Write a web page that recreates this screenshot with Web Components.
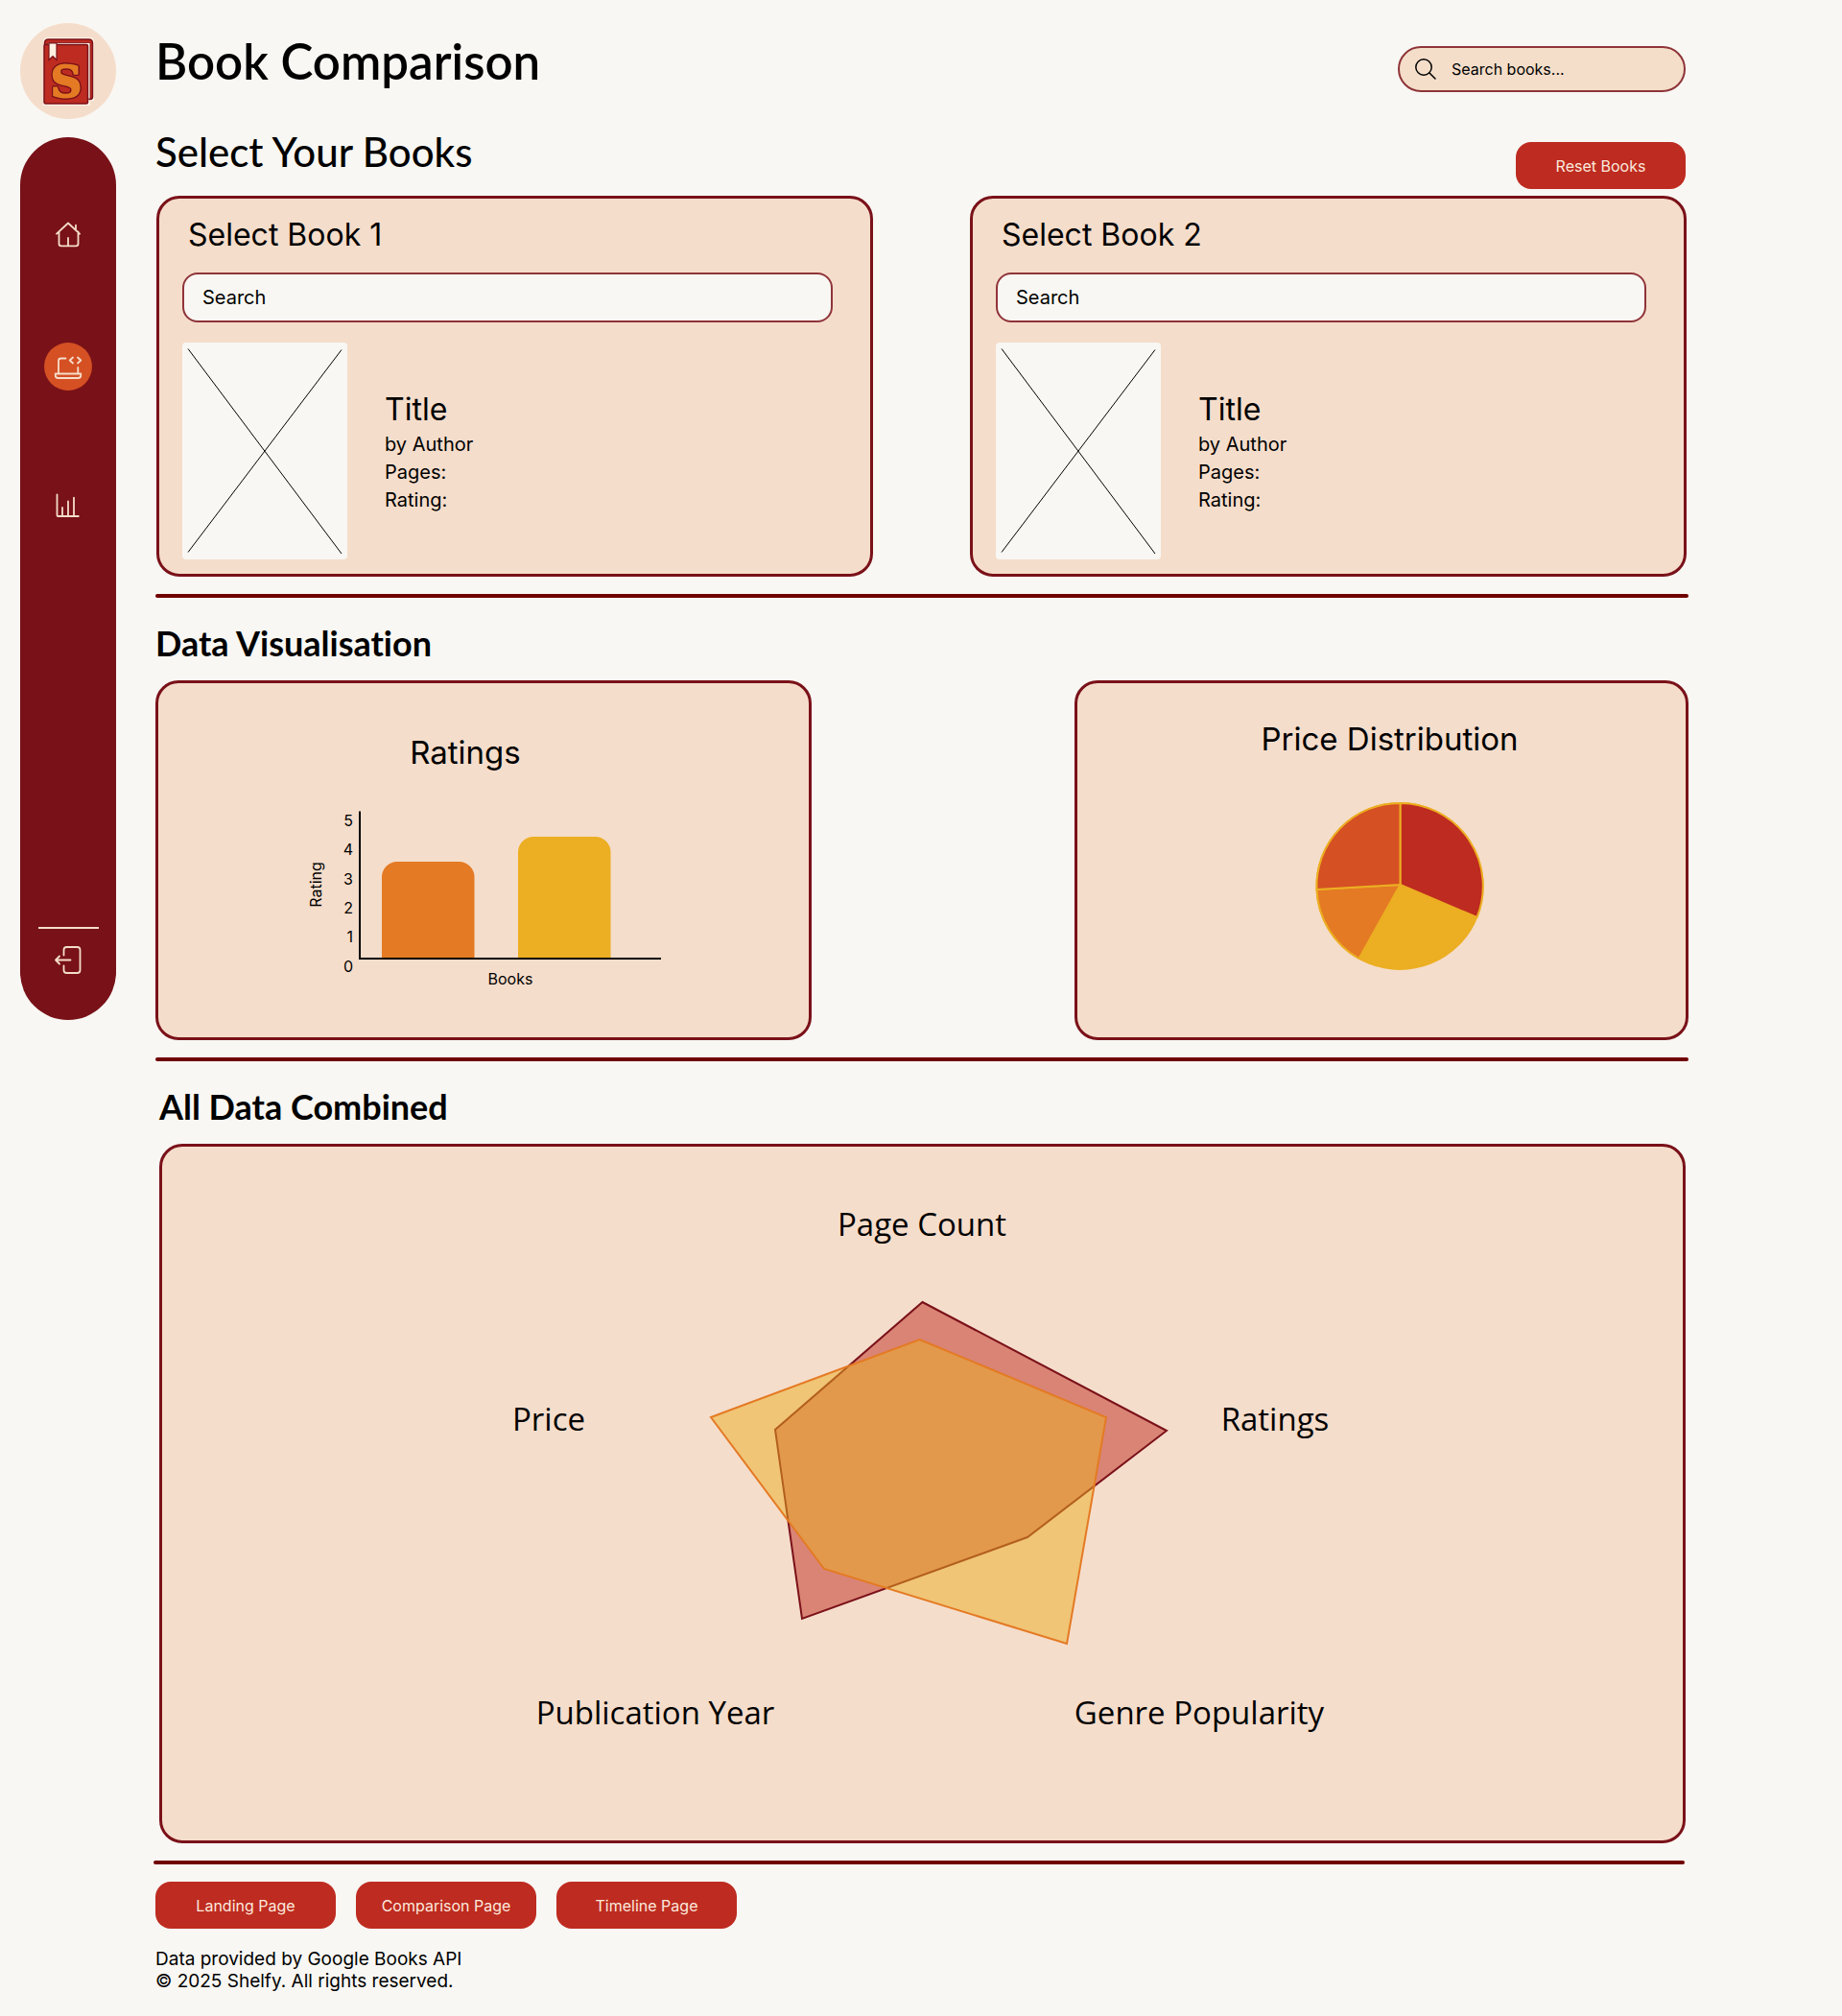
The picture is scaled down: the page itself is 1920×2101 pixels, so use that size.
<!DOCTYPE html>
<html lang="en">
<head>
<meta charset="utf-8">
<meta name="viewport" content="width=device-width, initial-scale=1">
<title>Book Comparison – Shelfy</title>
<style>
  :root {
    --paper: #f8f7f3;
    --sand: #f5ddcb;
    --wine: #781118;
    --field-line: #8f3439;
    --rule: #700000;
    --red: #be2b20;
    --rust: #d55023;
    --orange: #e47a24;
    --gold: #ecae22;
    --heading: Lato, "Open Sans", sans-serif;
    --body: Inter, "Liberation Sans", sans-serif;
  }
  body {
    margin: 0;
    background: var(--paper);
    color: #000;
    font: 400 20px/29px var(--body);
  }
</style>
</head>
<body>
<book-app></book-app>

<script>
const define = (name, html, init) => {
  const template = document.createElement('template');
  template.innerHTML = `<style>
    *, *::before, *::after { box-sizing: border-box; }
    h1, h2, h3, p, ul, figure { margin: 0; padding: 0; }
    ul { list-style: none; }
    svg { display: block; }
  </style>` + html;
  customElements.define(name, class extends HTMLElement {
    constructor() {
      super();
      this.attachShadow({ mode: 'open' }).append(template.content.cloneNode(true));
    }
    connectedCallback() { if (init) init(this, this.shadowRoot); }
  });
};

define('shelfy-logo', `
  <style>
    :host { display: block; width: 100px; height: 100px; }
    text { font: 700 45px "DejaVu Serif", serif; fill: var(--orange); stroke: var(--orange); stroke-width: 2;
      filter: drop-shadow(1px 0 0 #7a1119) drop-shadow(-1px 0 0 #7a1119) drop-shadow(0 1px 0 #7a1119) drop-shadow(0 -1px 0 #7a1119); }
  </style>
  <svg width="100" height="100" viewBox="0 0 100 100" role="img" aria-label="Shelfy">
    <circle cx="50" cy="50" r="50" fill="#f5ddcb"/>
    <path d="M24 86V20q0-5 5-5h44q4 0 4 4v62h-4v5z" fill="#fff4e6"/>
    <path d="M25.500 24v-3q0-4 4-4h42q4 0 4 4v56q0 2.500-3 2.500z" fill="#be2b20" stroke="#7a1119" stroke-width="1.500"/>
    <path d="M27 25q0-4.500 4-4.500h42V79H70V25z" fill="#fff4e6" stroke="#7a1119" stroke-width=".8"/>
    <path d="M25 24q0-1.500 1.500-1.500H69q1.500 0 1.500 1.500v58.500q0 1.500-1.500 1.500H26.500q-1.500 0-1.500-1.500z" fill="#be2b20" stroke="#7a1119" stroke-width="1.500"/>
    <path d="M30 21h8v17.500l-4-3.800-4 3.800z" fill="#fff0e0" stroke="#7a1119" stroke-width="1.200"/>
    <text x="48" y="77" text-anchor="middle">S</text>
  </svg>`);

define('side-nav', `
  <style>
    :host { display: flex; flex-direction: column; align-items: center; min-height: 920px;
      padding: 76px 0 38px; border-radius: 50px; background: var(--wine); }
    ul { display: flex; flex-direction: column; gap: 88px; }
    a { display: block; width: 50px; height: 50px; border-radius: 50%; color: var(--sand); }
    a[aria-current] { background: var(--rust); }
    .end { margin-top: auto; display: flex; flex-direction: column; align-items: center; gap: 7px; }
    hr { width: 63px; height: 2px; margin: 0; border: 0; background: var(--sand); }
    svg { fill: none; stroke: currentColor; stroke-width: 1.8; stroke-linecap: round; stroke-linejoin: round; }
  </style>
  <ul>
    <li><a href="#home" aria-label="Home"><svg width="50" height="50" viewBox="0 0 50 50"><path d="M13 24.700 25 13.500l12 11.200M33 15.700V21M15.500 22.500V35q0 2.300 2.300 2.300h15.400q2.300 0 2.300-2.300V22.500M25 29v8"/></svg></a></li>
    <li><a href="#compare" aria-label="Comparison" aria-current="page"><svg width="50" height="50" viewBox="0 0 50 50"><path d="M22.500 16.500H17.500q-2.500 0-2.500 2.500v13.500M35.300 26v6.500M11.700 32.500h26.600v1.500q0 3-3 3H14.700q-3 0-3-3zM30 15.500l-3.300 3 3.300 3M35 15.500l3.300 3-3.300 3"/></svg></a></li>
    <li><a href="#timeline" aria-label="Statistics"><svg width="50" height="50" viewBox="0 0 50 50"><path d="M13.500 20.500V42q0 1 1 1h21.300M19 34v8.500M25 27.500v15M31 23.700v18.800"/></svg></a></li>
  </ul>
  <div class="end">
    <hr>
    <a href="#logout" aria-label="Log out"><svg width="50" height="50" viewBox="0 0 50 50"><path d="M20.500 20.500V15q0-3 3-3h11q3 0 3 3v21q0 3-3 3h-11q-3 0-3-3v-4.500M27.500 25.500H12M16 21.500l-4 4 4 4"/></svg></a>
  </div>`);

define('search-pill', `
  <style>
    :host { display: block; width: 300px; }
    label { display: flex; align-items: center; gap: 16px; height: 48px; padding: 0 16px;
      border: 2px solid var(--field-line); border-radius: 24px; background: #f4dec9; }
    input { flex: 1; min-width: 0; padding: 0; border: 0; outline: 0; background: none; color: inherit;
      font: 400 16px/24px var(--body); }
    input::placeholder { color: #000; opacity: 1; }
  </style>
  <label>
    <svg width="22" height="22" viewBox="0 0 22 22" fill="none" stroke="#000" stroke-width="1.500" stroke-linecap="round" aria-hidden="true"><circle cx="9" cy="9" r="8.200"/><path d="M15 15l6 6"/></svg>
    <input type="search" placeholder="Search books..." aria-label="Search books">
  </label>`);

define('pill-button', `
  <style>
    :host { display: block; width: 188px; }
    a, button { display: flex; align-items: center; justify-content: center; width: 100%; height: 49px;
      padding: 0; border: 0; border-radius: 16px; background: var(--red); color: #fbe9dd;
      font: 400 16px/24px var(--body); text-decoration: none; cursor: pointer; }
  </style>
  <button type="button"><slot></slot></button>`,
  (host, root) => {
    const href = host.getAttribute('href');
    const button = root.querySelector('button');
    if (href && button) {
      const link = document.createElement('a');
      link.href = href;
      link.append(root.querySelector('slot'));
      button.replaceWith(link);
    }
  });

define('panel-card', `
  <style>
    :host { display: block; border: 3px solid #7a1119; border-radius: 24px; background: var(--sand); }
  </style>
  <slot></slot>`);

define('section-rule', `
  <style>
    :host { display: block; height: 4px; border-radius: 2px; background: var(--rule); }
  </style>`);

define('book-picker', `
  <style>
    :host { display: block; }
    panel-card { padding: 18px 39px 15px 24px; }
    label { display: block; padding-left: 6px; margin-bottom: 19px; font-size: 32px; line-height: 40px; }
    input { display: block; width: 100%; height: 52px; padding: 0 19px; border: 2px solid var(--field-line);
      border-radius: 16px; outline: 0; background: var(--paper); color: inherit; font: 400 20px/29px var(--body); }
    input::placeholder { color: #000; opacity: 1; }
    .book { display: flex; align-items: center; gap: 39px; margin-top: 21px; }
    .cover { flex: none; border-radius: 4px; background: var(--paper); }
    .facts { padding-top: 2px; }
    h3 { font-size: 32px; line-height: 40px; font-weight: 400; margin-bottom: 2px; }
  </style>
  <panel-card>
    <label for="q"></label>
    <input id="q" type="search" placeholder="Search">
    <div class="book">
      <svg class="cover" width="172" height="226" viewBox="0 0 172 226" stroke="#000" stroke-width="1" role="img" aria-label="Cover placeholder"><path d="M6 6.500 166 220M166 7.500 6 218.500"/></svg>
      <div class="facts">
        <h3>Title</h3>
        <p>by Author</p>
        <p>Pages:</p>
        <p>Rating:</p>
      </div>
    </div>
  </panel-card>`,
  (host, root) => { root.querySelector('label').textContent = host.getAttribute('heading'); });

define('ratings-chart', `
  <style>
    :host { display: block; }
    figure { display: flex; flex-direction: column; align-items: center; gap: 36px; padding: 52px 38px 46px 0; }
    figcaption { font-size: 33px; line-height: 40px; }
    svg { width: 408px; max-width: 100%; height: auto; }
    text { font: 400 16px var(--body); }
  </style>
  <figure>
    <figcaption>Ratings</figcaption>
    <svg viewBox="0 0 408 195">
      <path d="M117 159V74a16 16 0 0 1 16-16h64.500a16 16 0 0 1 16 16v85z" fill="#e47a24"/>
      <path d="M259 159V48a16 16 0 0 1 16-16h64.500a16 16 0 0 1 16 16v111z" fill="#ecae22"/>
      <path d="M94 5.500V159h314" fill="none" stroke="#000" stroke-width="2"/>
      <g text-anchor="end">
        <text x="87" y="21">5</text>
        <text x="87" y="51">4</text>
        <text x="87" y="82">3</text>
        <text x="87" y="112">2</text>
        <text x="87" y="142">1</text>
        <text x="87" y="173">0</text>
      </g>
      <text transform="translate(54 82) rotate(-90)" text-anchor="middle">Rating</text>
      <text x="251" y="186" text-anchor="middle">Books</text>
    </svg>
  </figure>`);

define('price-chart', `
  <style>
    :host { display: block; }
    figure { display: flex; flex-direction: column; align-items: center; gap: 40px; padding: 38px 0 40px 17px; }
    figcaption { font-size: 33px; line-height: 40px; }
    svg { width: 196px; max-width: 100%; height: auto; }
  </style>
  <figure>
    <figcaption>Price Distribution</figcaption>
    <svg viewBox="0 0 196 190" stroke="#ecae22" stroke-width="2" stroke-linejoin="round" role="img" aria-label="Price distribution pie chart">
      <circle cx="108" cy="93.500" r="86.500" fill="#ecae22"/>
      <path d="M108.500 92V7A86.500 86.500 0 0 1 188.500 126z" fill="#be2b20"/>
      <path d="M108.500 92 65.500 169A86.500 86.500 0 0 1 21.500 97z" fill="#e47a24"/>
      <path d="M108.500 92 21.500 97A86.500 86.500 0 0 1 108.500 7z" fill="#d55023"/>
    </svg>
  </figure>`);

define('radar-chart', `
  <style>
    :host { display: flex; justify-content: center; }
    svg { width: 902px; max-width: 100%; height: auto; }
    text { font: 400 33px "Open Sans", sans-serif; text-anchor: middle; }
  </style>
  <svg viewBox="0 0 902 723">
    <polygon points="450.500,162 705,296 560,407 325,492 297,295" fill="#be2b20" fill-opacity=".5" stroke="#7a1119" stroke-width="2"/>
    <polygon points="447.500,201 642,282 601,518 348,440 230,282" fill="#ecae22" fill-opacity=".5" stroke="#e47a24" stroke-width="2"/>
    <text x="450" y="93">Page Count</text>
    <text x="61" y="296">Price</text>
    <text x="818" y="296">Ratings</text>
    <text x="172" y="602">Publication Year</text>
    <text x="739" y="602">Genre Popularity</text>
  </svg>`);

define('book-app', `
  <style>
    :host { display: flex; align-items: flex-start; }
    aside { flex: none; display: flex; flex-direction: column; gap: 19px; width: 162px; padding: 24px 41px 0 21px; }
    main { flex: 1; min-width: 0; padding: 32px 160px 25px 0; }
    header { display: flex; align-items: flex-end; justify-content: space-between; padding-right: 3px; }
    h1, h2, h3 { font-family: var(--heading); font-variant-ligatures: none; }
    h1 { font-size: 51px; line-height: 64px; font-weight: 600; }
    h2 { font-size: 42px; line-height: 56px; font-weight: 500; }
    h3 { margin: 23px 0 15px; font-size: 36px; line-height: 48px; font-weight: 700; }
    section-rule { margin-top: 18px; }
    .select { display: flex; align-items: flex-end; justify-content: space-between; margin: 34px 3px 7px 0; }
    .select h2 { margin-bottom: 11px; }
    .select pill-button { width: 177px; }
    .pickers { display: grid; grid-template-columns: 1fr 1fr; gap: 101px; padding: 0 2px 0 1px; }
    .charts { display: grid; grid-template-columns: 684fr 640fr; gap: 274px; }
    .combined { padding: 0 3px 0 4px; }
    footer { margin: 0 4px 0 -2px; }
    footer nav { display: flex; gap: 21px; padding: 18px 2px 20px; }
    footer p { padding-left: 2px; font-size: 19px; line-height: 23px; }
  </style>
  <aside>
    <shelfy-logo></shelfy-logo>
    <side-nav></side-nav>
  </aside>
  <main>
    <header>
      <h1>Book Comparison</h1>
      <search-pill></search-pill>
    </header>
    <section>
      <div class="select">
        <h2>Select Your Books</h2>
        <pill-button>Reset Books</pill-button>
      </div>
      <div class="pickers">
        <book-picker heading="Select Book 1"></book-picker>
        <book-picker heading="Select Book 2"></book-picker>
      </div>
    </section>
    <section-rule></section-rule>
    <section>
      <h3>Data Visualisation</h3>
      <div class="charts">
        <panel-card><ratings-chart></ratings-chart></panel-card>
        <panel-card><price-chart></price-chart></panel-card>
      </div>
    </section>
    <section-rule></section-rule>
    <section class="combined">
      <h3>All Data Combined</h3>
      <panel-card><radar-chart></radar-chart></panel-card>
    </section>
    <footer>
      <section-rule></section-rule>
      <nav>
        <pill-button href="#landing">Landing Page</pill-button>
        <pill-button href="#comparison">Comparison Page</pill-button>
        <pill-button href="#timeline">Timeline Page</pill-button>
      </nav>
      <p>Data provided by Google Books API</p>
      <p>© 2025 Shelfy. All rights reserved.</p>
    </footer>
  </main>`);
</script>
</body>
</html>
